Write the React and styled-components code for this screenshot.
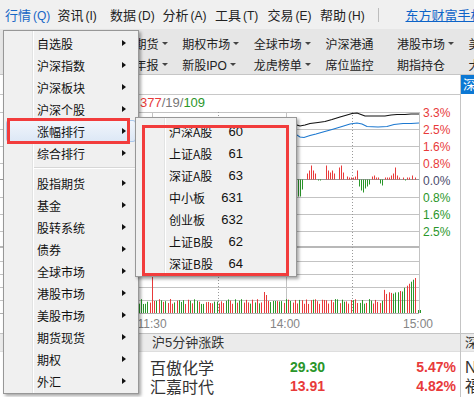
import React from 'react';
import styled, { createGlobalStyle } from 'styled-components';

const GlobalStyle = createGlobalStyle`
  html, body {
    margin: 0;
    padding: 0;
    background: #fff;
  }
  body {
    font-family: "Liberation Sans", "Noto Sans CJK SC", sans-serif;
  }
`;

const RED = '#e83a3a';
const GREEN = '#2a962a';

const Screen = styled.div`
  position: relative;
  width: 474px;
  height: 397px;
  overflow: hidden;
  background: #fff;
  font-family: "Liberation Sans", "Noto Sans CJK SC", sans-serif;
  color: #222;
`;

/* ---------- top menu ---------- */

const MenuBar = styled.div`
  display: flex;
  align-items: center;
  height: 29px;
  padding-left: 5px;
  background: #f0f0f0;
  font-size: 13px;
  white-space: nowrap;
`;

const MenuTitle = styled.span`
  flex: 0 0 52.5px;
  color: ${(p) => (p.$active ? '#1767c6' : '#222')};
`;

const Accel = styled.span`
  margin-left: 2px;
  font-size: 12px;
`;

const MenuDivider = styled.span`
  flex: 0 0 1px;
  height: 14px;
  margin: 0 27px 0 5px;
  background: #bdbdbd;
`;

const TopLink = styled.a`
  color: #0d63c8;
  text-decoration: underline;
  font-size: 13px;
`;

/* ---------- quick nav ---------- */

const NavBar = styled.div`
  display: grid;
  grid-template-columns: repeat(7, 71.6px);
  grid-auto-rows: 21px;
  height: 46px;
  box-sizing: border-box;
  padding: 4px 0 0 39px;
  background: #e6e6e6;
  border-bottom: 1px solid #c6c6c6;
  font-size: 12px;
  white-space: nowrap;
`;

const NavItem = styled.span`
  display: flex;
  align-items: center;
  color: #222;
`;

const DownCaret = styled.i`
  margin-left: 3px;
  border-top: 3px solid #444;
  border-left: 3px solid transparent;
  border-right: 3px solid transparent;
`;

/* ---------- main area ---------- */

const Main = styled.div`
  display: flex;
  height: 322px;
`;

const CenterPane = styled.div`
  flex: 0 0 461px;
  box-sizing: border-box;
  border-right: 1px solid #c4c4c4;
  display: flex;
  flex-direction: column;
`;

const PaneHeader = styled.div`
  height: 19px;
  border-bottom: 1px solid #c8c8c8;
`;

const StatsRow = styled.div`
  height: 17px;
  line-height: 15px;
  padding-left: 140px;
  font-size: 13px;
`;

const Stat = styled.span`
  color: ${(p) => p.$color};
`;

const ChartSvg = styled.svg`
  display: block;
  overflow: visible;
  font-family: "Liberation Sans", sans-serif;
`;

const SectionHeader = styled.div`
  height: 19px;
  line-height: 18px;
  box-sizing: border-box;
  padding-left: ${(p) => p.$indent}px;
  background: #ebebeb;
  border-top: 1px solid #c4c4c4;
  border-bottom: 1px solid #dedede;
  font-size: 13px;
  color: #333;
  white-space: nowrap;
`;

const RankList = styled.div`
  padding-top: 6px;
`;

const RankRow = styled.div`
  display: flex;
  align-items: center;
  height: 19px;
  line-height: 19px;
  padding: 0 4px 0 150px;
`;

const StockName = styled.span`
  flex: 0 0 115px;
  font-size: 16px;
  color: #333;
  font-family: "Noto Sans CJK SC", sans-serif;
`;

const Num = styled.span`
  flex: ${(p) => (p.$grow ? '1 1 auto' : '0 0 60px')};
  text-align: right;
  font-size: 14px;
  font-weight: bold;
  color: ${(p) => p.$color};
`;

const SidePane = styled.div`
  flex: 1 0 100px;
  display: flex;
  flex-direction: column;
`;

const SideTab = styled.div`
  height: 19px;
  line-height: 19px;
  padding-left: 2px;
  background: #0c78d4;
  color: #fff;
  font-size: 13px;
`;

const SideSpace = styled.div`
  height: 239px;
`;

const SideRow = styled.div`
  height: 19px;
  line-height: 19px;
  padding-left: 4px;
  font-size: 16px;
  color: #333;
  white-space: nowrap;
`;

/* ---------- dropdown menus ---------- */

const Dropdown = styled.div`
  position: absolute;
  left: ${(p) => p.$left}px;
  top: ${(p) => p.$top}px;
  width: ${(p) => p.$width}px;
  box-sizing: border-box;
  padding: ${(p) => p.$pad}px 0;
  border: 1px solid #979797;
  background: linear-gradient(
    to right,
    #f0f0f0 28px,
    #e2e3e3 28px,
    #e2e3e3 29px,
    #ffffff 29px,
    #ffffff 30px,
    #f0f0f0 30px
  );
  box-shadow: 2px 2px 3px rgba(0, 0, 0, 0.35);
  font-family: "Noto Sans CJK SC", sans-serif;
  font-size: 12px;
  color: #111;
`;

const DropItem = styled.div`
  display: flex;
  align-items: center;
  height: 22px;
  box-sizing: border-box;
  margin: 0 2px;
  padding: 0 9px 0 31px;
  border-radius: 3px;
  border: 1px solid ${(p) => (p.$hover ? '#a9c6ea' : 'transparent')};
  background: ${(p) => (p.$hover ? 'linear-gradient(#f1f5fb, #dde8f6)' : 'transparent')};
  white-space: nowrap;
`;

const ItemLabel = styled.span`
  flex: 1 1 auto;
  margin-left: -1px;
`;

const SubArrow = styled.i`
  border-left: 4px solid #111;
  border-top: 3.5px solid transparent;
  border-bottom: 3.5px solid transparent;
`;

const DropSeparator = styled.div`
  height: 8px;
  margin-left: 30px;
  display: flex;
  align-items: center;
  &::after {
    content: '';
    flex: 1;
    height: 1px;
    background: #d7d7d7;
    border-bottom: 1px solid #fff;
  }
`;

const CodeItem = styled.div`
  display: grid;
  grid-template-columns: 52px 22px;
  align-items: center;
  height: 22px;
  margin: 0 2px;
  padding-left: 31px;
  white-space: nowrap;
`;

const Code = styled.span`
  text-align: right;
  font-family: "Liberation Sans", sans-serif;
  font-size: 13px;
`;

const Callout = styled.div`
  position: absolute;
  left: ${(p) => p.$left}px;
  top: ${(p) => p.$top}px;
  width: ${(p) => p.$w}px;
  height: ${(p) => p.$h}px;
  box-sizing: border-box;
  border: 3px solid #f23c3c;
  pointer-events: none;
`;

/* ---------- data ---------- */

const topMenus = [
  ['行情', 'Q'],
  ['资讯', 'I'],
  ['数据', 'D'],
  ['分析', 'A'],
  ['工具', 'T'],
  ['交易', 'E'],
  ['帮助', 'H'],
];

const navItems = [
  ['沪深指数', true], ['股指期货', true], ['期权市场', true], ['全球市场', true],
  ['沪深港通', false], ['港股市场', true], ['美股市场', true],
  ['板块监测', true], ['业绩年报', true], ['新股IPO', true], ['龙虎榜单', true],
  ['席位监控', false], ['期指持仓', false], ['大宗交易', false],
];

const marketMenu = [
  '自选股', '沪深指数', '沪深板块', '沪深个股', '涨幅排行', '综合排行', '-',
  '股指期货', '基金', '股转系统', '债券', '全球市场', '港股市场', '美股市场',
  '期货现货', '期权', '外汇',
];

const rankCodes = [
  ['沪深A股', '60'], ['上证A股', '61'], ['深证A股', '63'], ['中小板', '631'],
  ['创业板', '632'], ['上证B股', '62'], ['深证B股', '64'],
];

const axisLabels = [
  ['3.3%', RED], ['2.5%', RED], ['1.6%', RED], ['0.8%', RED],
  ['0.0%', '#4b4b6b'], ['0.8%', GREEN], ['1.6%', GREEN], ['2.5%', GREEN],
];

// y values relative to the chart top
const indexLine = [
  [140, 20], [200, 18], [260, 15], [297, 13], [300, 14], [305, 13], [310, 11.5],
  [318, 10.5], [325, 9.5], [332, 7.5], [340, 5], [347, 3], [352, 1.5], [357, 1],
  [361, 2.5], [365, 4], [375, 4], [385, 4], [391, 3], [397, 2.5], [405, 2.5],
  [411, 2], [419, 2],
];

const avgLine = [
  [140, 30], [200, 28], [260, 26], [297, 23], [300, 25], [304, 25.5], [310, 23.5],
  [316, 22], [323, 20], [332, 17.5], [342, 14.5], [350, 12], [357, 11], [362, 12],
  [367, 14.5], [378, 15], [387, 14.5], [394, 12.5], [403, 11.5], [411, 11.5], [419, 11],
];

const diffBars = [
  [298, -17], [300, -17], [302, -10], [307, 6], [309, 9], [311, 14], [313, 9],
  [315, 6], [318, -1], [320, -1], [326, 14], [328, 9], [330, 7], [332, 9],
  [334, 6], [339, 12], [341, 14], [343, 7], [347, 3], [349, 2], [351, 2],
  [353, 2], [355, 3], [357, 9], [359, -7], [361, -11], [363, -13], [365, -9],
  [367, -7], [369, -5], [372, 3], [374, 4], [376, 2], [378, 2], [380, -4],
  [382, -6], [385, 2], [387, 2], [389, 2], [391, 4], [393, 6], [395, 12],
  [397, 4], [399, 2], [403, 2], [405, -1], [407, 2], [409, 2], [412, 4], [415, 2],
];

const volumeBars = (() => {
  let seed = 11;
  const rnd = () => {
    seed = (seed * 9301 + 49297) % 233280;
    return seed / 233280;
  };
  const bars = [];
  for (let i = 0; i <= 240; i++) {
    const x = -116 + i * 2.233;
    const h0 = 9 + rnd() * 5;
    const up = rnd() > 0.42;
    if (x < 128) continue;
    let h = h0;
    let red = up;
    if (Math.abs(x - 152) < 1.2) { h = 36; red = true; }
    if (Math.abs(x - 263) < 1.2) { h = 21; red = true; }
    if (Math.abs(x - 266) < 1.2) { h = 18; red = true; }
    if (x > 383 && x < 404) h = 19 + rnd() * 5;
    if (x >= 404 && x < 415) h = 25 + (x - 404) * 0.9;
    if (x >= 415 && x < 417) { h = 35; red = true; }
    if (x >= 417) { h = 3; red = false; }
    bars.push({ x: Math.round(x) + 0.5, h, red });
  }
  return bars;
})();

const toPoints = (pts) => pts.map(([x, y]) => `${x},${y}`).join(' ');

/* ---------- parts ---------- */

function IntradayChart() {
  const priceGrid = [0, 17, 34, 51, 85, 102, 119];
  const volGrid = [149, 162, 175, 188];
  return (
    <ChartSvg width="460" height="221" viewBox="0 0 460 221">
      {priceGrid.map((y) => (
        <line key={y} x1="0" x2="419" y1={y + 0.5} y2={y + 0.5} stroke="#c3c3c3" />
      ))}
      <line x1="0" x2="419" y1="67.5" y2="67.5" stroke="#9a9a9a" />
      <line x1="0" x2="419" y1="135" y2="135" stroke="#b8b8b8" strokeWidth="2" />
      {volGrid.map((y) => (
        <line key={y} x1="0" x2="419" y1={y + 0.5} y2={y + 0.5} stroke="#c3c3c3" />
      ))}
      <line x1="0" x2="419" y1="201.5" y2="201.5" stroke="#b0b0b0" />
      {[152.5, 286.5, 419.5].map((x) => (
        <line key={x} x1={x} x2={x} y1="0" y2="201" stroke="#c3c3c3" />
      ))}
      {[218.5, 352.5].map((x) => (
        <line key={x} x1={x} x2={x} y1="0" y2="201" stroke="#9a9a9a" strokeDasharray="1 2" />
      ))}

      {diffBars.map(([x, d]) => (
        <line
          key={x}
          x1={x + 0.5}
          x2={x + 0.5}
          y1="67.5"
          y2={67.5 - d}
          stroke={d > 0 ? RED : GREEN}
        />
      ))}
      <polyline points={toPoints(avgLine)} fill="none" stroke="#1c78d0" strokeWidth="1.2" />
      <polyline points={toPoints(indexLine)} fill="none" stroke="#111" strokeWidth="1.2" />

      {volumeBars.map((b) => (
        <line
          key={b.x}
          x1={b.x}
          x2={b.x}
          y1="201"
          y2={201 - b.h}
          stroke={b.red ? RED : GREEN}
        />
      ))}

      {axisLabels.map(([t, c], i) => (
        <text key={i} x="423" y={i * 17 + 5} fontSize="12" fill={c}>
          {t}
        </text>
      ))}
      {[['11:30', 152], ['14:00', 285], ['15:00', 418]].map(([t, x]) => (
        <text key={t} x={x} y="216" fontSize="12" fill="#858585" textAnchor="middle">
          {t}
        </text>
      ))}
    </ChartSvg>
  );
}

export default function App() {
  return (
    <Screen>
      <GlobalStyle />

      <MenuBar>
        {topMenus.map(([name, key], i) => (
          <MenuTitle key={name} $active={i === 0}>
            {name}
            <Accel>({key})</Accel>
          </MenuTitle>
        ))}
        <MenuDivider />
        <TopLink>东方财富手机版</TopLink>
      </MenuBar>

      <NavBar>
        {navItems.map(([label, caret]) => (
          <NavItem key={label}>
            {label}
            {caret && <DownCaret />}
          </NavItem>
        ))}
      </NavBar>

      <Main>
        <CenterPane>
          <PaneHeader />
          <StatsRow>
            <Stat $color={RED}>377</Stat>
            <Stat $color="#777">/19/</Stat>
            <Stat $color={GREEN}>109</Stat>
          </StatsRow>
          <IntradayChart />
          <SectionHeader $indent={152}>沪5分钟涨跌</SectionHeader>
          <RankList>
            <RankRow>
              <StockName>百傲化学</StockName>
              <Num $color={GREEN}>29.30</Num>
              <Num $grow $color={RED}>5.47%</Num>
            </RankRow>
            <RankRow>
              <StockName>汇嘉时代</StockName>
              <Num $color={RED}>13.91</Num>
              <Num $grow $color={RED}>4.82%</Num>
            </RankRow>
          </RankList>
        </CenterPane>

        <SidePane>
          <SideTab>深证成指</SideTab>
          <SideSpace />
          <SectionHeader $indent={4}>深5分钟涨跌</SectionHeader>
          <RankList>
            <SideRow>N新股</SideRow>
            <SideRow>福达股份</SideRow>
          </RankList>
        </SidePane>
      </Main>

      <Dropdown $left={3} $top={30} $width={136} $pad={1}>
        {marketMenu.map((label, i) =>
          label === '-' ? (
            <DropSeparator key={i} />
          ) : (
            <DropItem key={label} $hover={label === '涨幅排行'}>
              <ItemLabel>{label}</ItemLabel>
              <SubArrow />
            </DropItem>
          )
        )}
      </Dropdown>

      <Dropdown $left={135} $top={117} $width={162} $pad={2}>
        {rankCodes.map(([name, code]) => (
          <CodeItem key={code}>
            <span>{name}</span>
            <Code>{code}</Code>
          </CodeItem>
        ))}
      </Dropdown>

      <Callout $left={7} $top={118} $w={123} $h={26} />
      <Callout $left={142} $top={125} $w={147} $h={151} />
    </Screen>
  );
}
